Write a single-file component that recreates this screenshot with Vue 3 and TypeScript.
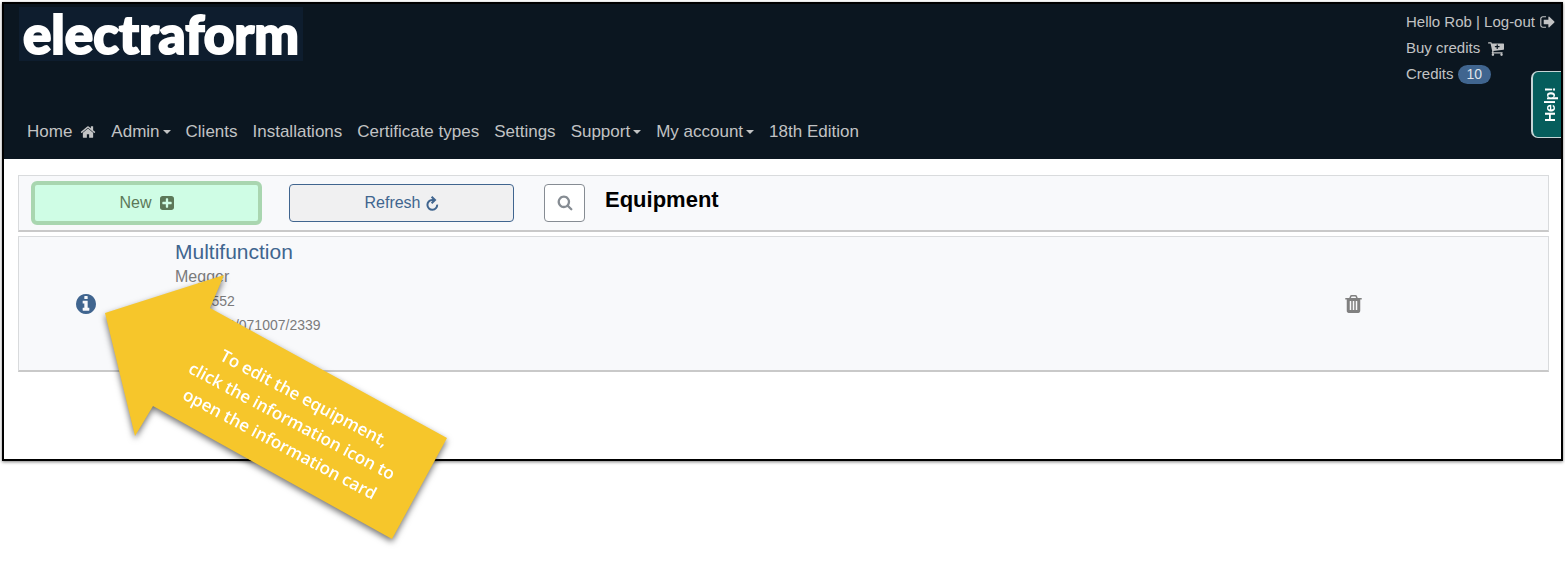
<script setup lang="ts">
interface NavItem {
  label: string
  menu?: boolean
  icon?: boolean
}

interface Equipment {
  name: string
  maker: string
  model: string
  serial: string
}

const navItems: NavItem[] = [
  { label: 'Home', icon: true },
  { label: 'Admin', menu: true },
  { label: 'Clients' },
  { label: 'Installations' },
  { label: 'Certificate types' },
  { label: 'Settings' },
  { label: 'Support', menu: true },
  { label: 'My account', menu: true },
  { label: '18th Edition' },
]

const equipment: Equipment[] = [
  { name: 'Multifunction', maker: 'Megger', model: 'MFT1552', serial: 'MFT1552/071007/2339' },
]

const credits = 10
</script>

<template>
  <div class="page">
    <div class="frame">
      <header class="topbar">
        <div class="brand-row">
          <a href="#" class="logo">electraform</a>
          <div class="account">
            <a href="#" class="account-line">
              Hello Rob | Log-out
              <svg class="icon-signout" viewBox="0 128 1600 1536" aria-hidden="true"><path d="M640 1440q0 4 1 20t.5 26.5-3 23.5-10 19.5-20.5 6.5h-320q-119 0-203.5-84.5t-84.5-203.5v-704q0-119 84.5-203.5t203.5-84.5h320q13 0 22.5 9.5t9.5 22.5q0 4 1 20t.5 26.5-3 23.5-10 19.5-20.5 6.5h-320q-66 0-113 47t-47 113v704q0 66 47 113t113 47h312l11.5 1 11.5 3 8 5.5 7 9 2 13.5zm928-544q0 26-19 45l-544 544q-19 19-45 19t-45-19-19-45v-288h-448q-26 0-45-19t-19-45v-384q0-26 19-45t45-19h448v-288q0-26 19-45t45-19 45 19l544 544q19 19 19 45z" /></svg>
            </a>
            <a href="#" class="account-line">
              Buy credits
              <svg class="icon-cart" viewBox="0 128 1664 1536" aria-hidden="true"><path d="M1216 704q0-26-19-45t-45-19h-128v-128q0-26-19-45t-45-19-45 19-19 45v128h-128q-26 0-45 19t-19 45 19 45 45 19h128v128q0 26 19 45t45 19 45-19 19-45v-128h128q26 0 45-19t19-45zm-576 832q0 53-37.5 90.5t-90.5 37.5-90.5-37.5-37.5-90.5 37.5-90.5 90.5-37.5 90.5 37.5 37.5 90.5zm896 0q0 53-37.5 90.5t-90.5 37.5-90.5-37.5-37.5-90.5 37.5-90.5 90.5-37.5 90.5 37.5 37.5 90.5zm128-1088v512q0 24-16 42.5t-41 21.5l-1044 122q1 7 4.5 21.5t6 26.5 2.5 22q0 16-24 64h920q26 0 45 19t19 45-19 45-45 19h-1024q-26 0-45-19t-19-45q0-14 11-39.5t29.5-59.5 20.5-38l-177-823h-204q-26 0-45-19t-19-45 19-45 45-19h256q16 0 28.5 6.5t20 15.5 13 24.5 7.5 26.5 5.5 29.5 4.5 25.5h1201q26 0 45 19t19 45z" /></svg>
            </a>
            <a href="#" class="account-line credits">Credits <span class="badge">{{ credits }}</span></a>
          </div>
        </div>
        <nav class="nav" aria-label="Main">
          <a v-for="item in navItems" :key="item.label" href="#" class="nav-link">
            {{ item.label }}
            <svg v-if="item.icon" class="icon-home" viewBox="0 0 1664 1792" aria-hidden="true"><path d="M1408 992v480q0 26-19 45t-45 19h-384v-384h-256v384h-384q-26 0-45-19t-19-45v-480q0-1 .5-3t.5-3l575-474 575 474q1 2 1 6zm223-69l-62 74q-8 9-21 11h-3q-13 0-21-7l-692-577-692 577q-12 8-24 7-13-2-21-11l-62-74q-8-10-7-23.5t11-21.5l719-599q32-26 76-26t76 26l244 204v-195q0-14 9-23t23-9h192q14 0 23 9t9 23v408l219 182q10 8 11 21.5t-7 23.5z" /></svg>
            <span v-if="item.menu" class="caret"></span>
          </a>
        </nav>
        <button type="button" class="help"><span>Help!</span></button>
      </header>

      <main class="content">
        <section class="toolbar">
          <button type="button" class="btn btn-new">
            New
            <svg class="icon-plus" viewBox="128 128 1536 1536" aria-hidden="true"><path d="M1408 960v-128q0-26-19-45t-45-19h-320v-320q0-26-19-45t-45-19h-128q-26 0-45 19t-19 45v320h-320q-26 0-45 19t-19 45v128q0 26 19 45t45 19h320v320q0 26 19 45t45 19h128q26 0 45-19t19-45v-320h320q26 0 45-19t19-45zm256-544v960q0 119-84.5 203.5t-203.5 84.5h-960q-119 0-203.5-84.5t-84.5-203.5v-960q0-119 84.5-203.5t203.5-84.5h960q119 0 203.5 84.5t84.5 203.5z" /></svg>
          </button>
          <button type="button" class="btn btn-refresh">
            Refresh
            <svg class="icon-refresh" viewBox="0 0 13 15" aria-hidden="true"><path class="ring" d="M8.500 4H6.200A4.900 4.900 0 1 0 11.200 8.600" /><path class="ring" d="M5.600 0.800L9 4L5.600 7.200" /></svg>
          </button>
          <button type="button" class="btn btn-search" aria-label="Search">
            <svg class="icon-search" viewBox="0 64 1792 1792" aria-hidden="true"><path d="M1216 832q0-185-131.500-316.500t-316.500-131.500-316.500 131.500-131.500 316.500 131.500 316.500 316.500 131.500 316.500-131.500 131.500-316.500zm512 832q0 52-38 90t-90 38q-54 0-90-38l-343-342q-179 124-399 124-143 0-273.500-55.500t-225-150-150-225-55.500-273.500 55.500-273.500 150-225 225-150 273.500-55.500 273.500 55.500 225 150 150 225 55.500 273.500q0 220-124 399l343 343q37 37 37 90z" /></svg>
          </button>
          <h1 class="title">Equipment</h1>
        </section>

        <article v-for="item in equipment" :key="item.serial" class="card">
          <button type="button" class="icon-button" aria-label="Information">
            <svg class="icon-info" viewBox="128 128 1536 1536" aria-hidden="true"><path d="M1152 1376v-160q0-14-9-23t-23-9h-96v-512q0-14-9-23t-23-9h-320q-14 0-23 9t-9 23v160q0 14 9 23t23 9h96v320h-96q-14 0-23 9t-9 23v160q0 14 9 23t23 9h448q14 0 23-9t9-23zm-128-896v-160q0-14-9-23t-23-9h-192q-14 0-23 9t-9 23v160q0 14 9 23t23 9h192q14 0 23-9t9-23zm640 416q0 209-103 385.500t-279.500 279.500-385.500 103-385.500-103-279.500-279.500-103-385.500 103-385.500 279.500-279.500 385.500-103 385.500 103 279.500 279.500 103 385.500z" /></svg>
          </button>
          <div class="details">
            <h2>{{ item.name }}</h2>
            <p class="maker">{{ item.maker }}</p>
            <p>{{ item.model }}</p>
            <p>{{ item.serial }}</p>
          </div>
          <button type="button" class="icon-button" aria-label="Delete">
            <svg class="icon-trash" viewBox="192 128 1408 1536" aria-hidden="true"><path d="M704 1376v-704q0-14-9-23t-23-9h-64q-14 0-23 9t-9 23v704q0 14 9 23t23 9h64q14 0 23-9t9-23zm256 0v-704q0-14-9-23t-23-9h-64q-14 0-23 9t-9 23v704q0 14 9 23t23 9h64q14 0 23-9t9-23zm256 0v-704q0-14-9-23t-23-9h-64q-14 0-23 9t-9 23v704q0 14 9 23t23 9h64q14 0 23-9t9-23zm-544-992h448l-48-117q-7-9-17-11h-317q-10 2-17 11zm928 32v64q0 14-9 23t-23 9h-96v948q0 83-47 143.500t-113 60.500h-832q-66 0-113-58.500t-47-141.500v-952h-96q-14 0-23-9t-9-23v-64q0-14 9-23t23-9h309l70-167q15-37 54-63t79-26h320q40 0 79 26t54 63l70 167h309q14 0 23 9t9 23z" /></svg>
          </button>
        </article>
      </main>

      <svg class="callout" viewBox="0 0 360 280" role="img" aria-label="Callout arrow">
        <polygon points="10,48 129,10 115,43 352,173 297,274 58,141 40,171" />
        <g transform="translate(197 156) rotate(28)">
          <text x="0" y="-20">To edit the equipment,</text>
          <text x="0" y="6">click the information icon to</text>
          <text x="0" y="32">open the information card</text>
        </g>
      </svg>
    </div>
  </div>
</template>

<style>
body {
  background: #fff;
}
</style>

<style scoped>
.page {
  display: flow-root;
  min-height: 100vh;
}

.frame {
  position: relative;
  box-sizing: border-box;
  margin: 2px;
  padding-bottom: 87px;
  border: 2px solid #000;
  background: #fff;
  box-shadow: 0 1px 3px rgba(0, 0, 0, 0.5);
  font-family: "Liberation Sans", Arial, sans-serif;
  font-size: 16px;
  line-height: 24px;
}

svg {
  flex: none;
  fill: currentColor;
}

a {
  color: inherit;
  text-decoration: none;
}

button {
  font: inherit;
  cursor: pointer;
}

.topbar {
  position: relative;
  padding: 3px 0 15px 15px;
  background: #0b1620;
  color: #c2c3c4;
}

.brand-row {
  display: flex;
  justify-content: space-between;
  align-items: flex-start;
  height: 113px;
}

.logo {
  box-sizing: border-box;
  width: 284px;
  height: 54px;
  background: #0e1d2e;
  color: #fff;
  font-family: Lato, sans-serif;
  font-size: 53px;
  font-weight: 900;
  line-height: 54px;
  text-align: center;
  -webkit-text-stroke: 2px #fff;
}

.account {
  display: flex;
  flex-direction: column;
  width: 155px;
  padding-top: 2px;
  font-size: 15px;
}

.account-line {
  display: flex;
  align-items: center;
  gap: 5px;
  height: 26px;
  white-space: nowrap;
}

.account-line + .account-line {
  gap: 8px;
}

.account-line.credits {
  gap: 4px;
}

.badge {
  padding: 0 9px;
  border-radius: 10px;
  background: #40658f;
  color: #dfe4ea;
  font-size: 14px;
  line-height: 19px;
}

.icon-signout {
  width: 15px;
  height: 14px;
}

.icon-cart {
  width: 16px;
  height: 15px;
}

.nav {
  display: flex;
  gap: 15px;
  padding-left: 8px;
  font-size: 17px;
}

.nav-link {
  display: flex;
  align-items: center;
  white-space: nowrap;
}

.icon-home {
  width: 16px;
  height: 16px;
  margin-left: 8px;
}

.caret {
  margin-left: 3px;
  border-top: 4px solid;
  border-right: 4px solid transparent;
  border-left: 4px solid transparent;
}

.help {
  position: absolute;
  top: 67px;
  right: 0;
  display: flex;
  align-items: center;
  justify-content: center;
  width: 30px;
  height: 67px;
  padding: 0 0 0 6px;
  border: 2px solid #c5d5d6;
  border-width: 1px 0 1px 2px;
  border-radius: 7px 0 0 7px;
  background: #055d5c;
  color: #fff;
  font-size: 14px;
  font-weight: 700;
}

.help span {
  writing-mode: vertical-rl;
  transform: rotate(180deg);
}

.content {
  display: flex;
  flex-direction: column;
  gap: 4px;
  padding: 16px 12px 0 14px;
}

.toolbar,
.card {
  border: 1px solid #d9dbdd;
  border-bottom: 2px solid #c9c9c9;
  background: #f8f9fb;
}

.toolbar {
  display: flex;
  align-items: center;
  padding: 5px 12px;
}

.btn {
  display: flex;
  align-items: center;
  justify-content: center;
  box-sizing: border-box;
  height: 38px;
  border: 1px solid #40658f;
  border-radius: 4px;
}

.btn-new {
  gap: 8px;
  width: 231px;
  height: 44px;
  border: 4px solid #a9d6b0;
  border-radius: 6px;
  background: #cffde5;
  color: #5c7858;
}

.btn-refresh {
  gap: 5px;
  width: 225px;
  margin-left: 27px;
  background: #f0f0f1;
  color: #40658f;
}

.btn-search {
  width: 41px;
  margin-left: 30px;
  padding: 0;
  border-color: #868c93;
  background: #fff;
  color: #868c93;
}

.icon-plus {
  width: 14px;
  height: 14px;
}

.icon-refresh {
  width: 13px;
  height: 15px;
}

.ring {
  fill: none;
  stroke: currentColor;
  stroke-width: 2;
}

.icon-search {
  width: 16px;
  height: 16px;
}

.title {
  margin: 0 0 6px 20px;
  color: #000;
  font-size: 22px;
  line-height: 26px;
}

.card {
  display: grid;
  grid-template-columns: 134px 1fr 390px;
  align-items: center;
  min-height: 133px;
}

.details {
  align-self: start;
  padding: 2px 0 0 22px;
  color: #7b7b7b;
  font-size: 14px;
}

h2,
p {
  margin: 0;
}

h2 {
  color: #40658f;
  font-size: 21px;
  font-weight: 400;
  line-height: 26px;
}

.maker {
  font-size: 16px;
}

.icon-button {
  display: flex;
  justify-content: center;
  padding: 0;
  border: 0;
  background: none;
  color: #808080;
}

.icon-info {
  width: 20px;
  height: 20px;
  color: #40658f;
}

.icon-trash {
  width: 17px;
  height: 18px;
}

.callout {
  position: absolute;
  top: 261px;
  left: 91px;
  width: 360px;
  height: 280px;
  overflow: visible;
  filter: drop-shadow(0 3px 3px rgba(0, 0, 0, 0.55));
  pointer-events: none;
}

.callout polygon {
  fill: #f6c62b;
}

.callout text {
  fill: #fff;
  font-family: "Open Sans", "Noto Sans", sans-serif;
  font-size: 17px;
  font-weight: 600;
  text-anchor: middle;
}
</style>
